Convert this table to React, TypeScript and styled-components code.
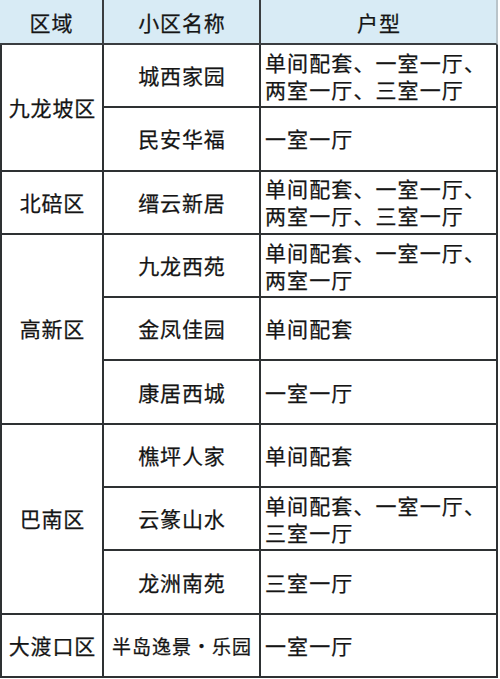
import React from "react";
import styled, { createGlobalStyle } from "styled-components";

const Global = createGlobalStyle`
  html, body { margin: 0; padding: 0; background: #ffffff; }
  body { font-family: "Noto Sans CJK SC", "Noto Sans", sans-serif; color: #151515; }
`;

const Grid = styled.div`
  display: grid;
  width: 498px;
  height: 678px;
  grid-template-columns: 104px 157px 237px;
  grid-template-rows: 45px repeat(10, 1fr);
  background: #ffffff;
`;

const HeadCell = styled.div<{ $last?: boolean }>`
  box-sizing: border-box;
  background: #d8ebf5;
  border-bottom: 2px solid #3a3d40;
  border-right: 2px solid ${(p) => (p.$last ? "#b9c4ca" : "#3a3d40")};
  display: flex;
  align-items: center;
  justify-content: center;
  font-size: 21px;
  letter-spacing: 0.8px;
  padding-left: 0.8px;
  -webkit-text-stroke: 0.25px #151515;
`;

const Cell = styled.div<{ $span?: number; $edge?: boolean; $align?: "center" | "left"; $small?: boolean }>`
  box-sizing: border-box;
  grid-row: span ${(p) => p.$span ?? 1};
  border-bottom: 2px solid #2e3133;
  border-right: 2px solid #2e3133;
  border-left: ${(p) => (p.$edge ? "2px solid #2e3133" : "none")};
  display: flex;
  flex-direction: column;
  align-items: ${(p) => (p.$align === "left" ? "flex-start" : "center")};
  justify-content: center;
  padding-left: ${(p) => (p.$align === "left" ? "4px" : "0.8px")};
  font-size: ${(p) => (p.$small ? "19px" : "21px")};
  letter-spacing: ${(p) => (p.$small ? "1px" : p.$align === "left" ? "1.1px" : "0.8px")};
  line-height: 27px;
  white-space: nowrap;
  -webkit-text-stroke: 0.25px #151515;
`;

const Line = styled.span`
  display: block;
`;

type Estate = { name: string; types: string[]; small?: boolean };
type Region = { region: string; estates: Estate[] };

const data: Region[] = [
  {
    region: "九龙坡区",
    estates: [
      { name: "城西家园", types: ["单间配套、一室一厅、", "两室一厅、三室一厅"] },
      { name: "民安华福", types: ["一室一厅"] },
    ],
  },
  {
    region: "北碚区",
    estates: [{ name: "缙云新居", types: ["单间配套、一室一厅、", "两室一厅、三室一厅"] }],
  },
  {
    region: "高新区",
    estates: [
      { name: "九龙西苑", types: ["单间配套、一室一厅、", "两室一厅"] },
      { name: "金凤佳园", types: ["单间配套"] },
      { name: "康居西城", types: ["一室一厅"] },
    ],
  },
  {
    region: "巴南区",
    estates: [
      { name: "樵坪人家", types: ["单间配套"] },
      { name: "云篆山水", types: ["单间配套、一室一厅、", "三室一厅"] },
      { name: "龙洲南苑", types: ["三室一厅"] },
    ],
  },
  {
    region: "大渡口区",
    estates: [{ name: "半岛逸景·乐园", types: ["一室一厅"], small: true }],
  },
];

export default function App() {
  return (
    <>
      <Global />
      <Grid>
        <HeadCell>区域</HeadCell>
        <HeadCell>小区名称</HeadCell>
        <HeadCell $last>户型</HeadCell>
        {data.map((r) =>
          r.estates.map((e, i) => (
            <React.Fragment key={r.region + e.name}>
              {i === 0 && (
                <Cell $span={r.estates.length} $edge>
                  {r.region}
                </Cell>
              )}
              <Cell $small={e.small}>{e.name}</Cell>
              <Cell $align="left">
                {e.types.map((t) => (
                  <Line key={t}>{t}</Line>
                ))}
              </Cell>
            </React.Fragment>
          ))
        )}
      </Grid>
    </>
  );
}
